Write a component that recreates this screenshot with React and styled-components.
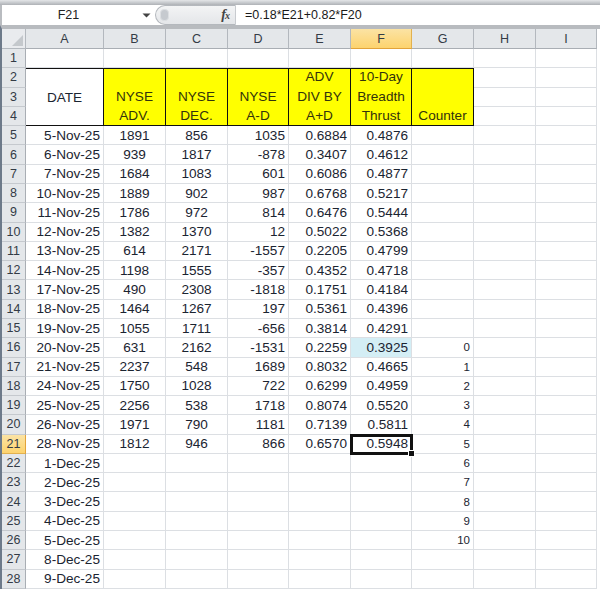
import React from "react";
import styled, { createGlobalStyle } from "styled-components";

const Global = createGlobalStyle`
  html, body { margin: 0; padding: 0; background: #fff; }
  body { width: 600px; height: 589px; overflow: hidden; font-family: "Liberation Sans", Arial, sans-serif; }
`;
const Page = styled.div`
  width: 600px; height: 589px; overflow: hidden; display: flex; flex-direction: column;
  background: #fff; color: #1b2431;
`;
const TopEdge = styled.div`
  height: 5px; background: linear-gradient(#e4e6e8, #c3c6ca 60%, #aeb1b5); flex: none;
`;
const FormulaBar = styled.div`
  height: 20px; flex: none; display: flex; align-items: stretch; background: #fff;
  border-left: 2px solid #b9bcc0;
`;
const NameBox = styled.div`
  width: 137px; flex: none; display: flex; align-items: center; justify-content: center;
  font-size: 12.5px; padding-right: 4px; box-sizing: border-box; color: #222;
`;
const Caret = styled.div`
  width: 15px; flex: none; display: flex; align-items: center; justify-content: center;
`;
const FnGroup = styled.div`
  width: 81px; flex: none; display: flex; align-items: center; justify-content: space-between;
  border: 1px solid #b4b8bd; border-right: 1px solid #c8cbcf; border-radius: 11px 0 0 11px;
  background: linear-gradient(#f3f4f5, #e4e6e9); box-sizing: border-box; margin-left: 1px; padding: 0 5px 0 4px;
`;
const Grip = styled.span`
  width: 9px; height: 12px; border-radius: 4px; background: #c6cacf; border: 1px solid #dcdfe2; box-sizing: border-box;
`;
const Fx = styled.span`
  font: italic bold 14px "Liberation Serif", serif; color: #444; line-height: 1;
`;
const FxSub = styled.span`
  font-size: 10px; margin-left: -1px;
`;
const FormulaText = styled.div`
  flex: 1; display: flex; align-items: center; padding-left: 9px; font-size: 12.5px; color: #1a1a1a;
`;
const Sheet = styled.div`
  flex: none; display: grid; height: 564px; border-top: 4px solid #b8bbbf; border-left: 2px solid #6d7a8a;
  box-sizing: border-box; width: 600px;
  grid-template-columns: 24px 78px 62px 62px 61px 62px 61px 62px 62px 61px 3px;
  grid-template-rows: 20px repeat(28, 19.29px);
  font-size: 13.6px;
`;
const Corner = styled.div`
  background: #e9ebee; border-right: 1px solid #b3b8be; border-bottom: 1px solid #b3b8be; position: relative;
  &::after {
    content: ""; position: absolute; right: 2px; bottom: 2px; width: 0; height: 0;
    border-style: solid; border-width: 0 0 11px 11px; border-color: transparent transparent #c4c8cc transparent;
  }
`;
const ColHead = styled.div`
  display: flex; align-items: center; justify-content: center; font-size: 12.5px; color: #333b46;
  background: ${p => p.$active ? "linear-gradient(#fbe3a4, #fdd36e)" : "#e4e7ea"};
  border-right: 1px solid ${p => p.$active ? "#e2b14f" : "#b3b8be"};
  border-bottom: 1px solid ${p => p.$active ? "#e2a33a" : "#a9aeb4"};
`;
const RowHead = styled.div`
  grid-column: 1;
  display: flex; align-items: center; justify-content: center; font-size: 12.5px; color: #333b46;
  background: ${p => p.$active ? "linear-gradient(#fbe3a4, #fdd36e)" : "#e4e7ea"};
  border-right: 1px solid ${p => p.$active ? "#e2a33a" : "#a9aeb4"};
  border-bottom: 1px solid ${p => p.$active ? "#e2b14f" : "#c5c9ce"};
`;
const Cell = styled.div`
  display: flex; align-items: center; white-space: nowrap; box-sizing: border-box; overflow: visible;
  justify-content: flex-end;
  padding: 0 3px 0 0;
  border-right: 1px solid #dcdfe3; border-bottom: 1px solid #dcdfe3;
  background: ${p => p.$hi ? "#d4eef5" : "transparent"};
  font-size: ${p => p.$small ? "11.5px" : "inherit"};
  position: relative;
`;
const Center = styled(Cell)`
  justify-content: center; padding: 0;
`;
const Selected = styled(Cell)`
  outline: 3px solid #111; outline-offset: -2px; z-index: 2;
  &::after {
    content: ""; position: absolute; right: -4px; bottom: -4px; width: 5px; height: 5px;
    background: #111; border: 1px solid #fff;
  }
`;
const HeaderCell = styled.div`
  grid-row: 3 / span 3;
  grid-column: ${p => p.$col};
  display: flex; flex-direction: column; align-items: center;
  justify-content: ${p => p.$plain ? "center" : "flex-end"};
  text-align: center; line-height: 19.29px; box-sizing: border-box;
  border-top: 1px solid #111; border-right: 1px solid #111; border-bottom: 1px solid #111;
  background: ${p => p.$plain ? "#fff" : "#ffff00"};
  color: ${p => p.$plain ? "#1b2431" : "#33330c"};
`;

const rows = [
  ["5-Nov-25",1891,856,1035,"0.6884","0.4876"],
  ["6-Nov-25",939,1817,-878,"0.3407","0.4612"],
  ["7-Nov-25",1684,1083,601,"0.6086","0.4877"],
  ["10-Nov-25",1889,902,987,"0.6768","0.5217"],
  ["11-Nov-25",1786,972,814,"0.6476","0.5444"],
  ["12-Nov-25",1382,1370,12,"0.5022","0.5368"],
  ["13-Nov-25",614,2171,-1557,"0.2205","0.4799"],
  ["14-Nov-25",1198,1555,-357,"0.4352","0.4718"],
  ["17-Nov-25",490,2308,-1818,"0.1751","0.4184"],
  ["18-Nov-25",1464,1267,197,"0.5361","0.4396"],
  ["19-Nov-25",1055,1711,-656,"0.3814","0.4291"],
  ["20-Nov-25",631,2162,-1531,"0.2259","0.3925"],
  ["21-Nov-25",2237,548,1689,"0.8032","0.4665"],
  ["24-Nov-25",1750,1028,722,"0.6299","0.4959"],
  ["25-Nov-25",2256,538,1718,"0.8074","0.5520"],
  ["26-Nov-25",1971,790,1181,"0.7139","0.5811"],
  ["28-Nov-25",1812,946,866,"0.6570","0.5948"],
  ["1-Dec-25"],["2-Dec-25"],["3-Dec-25"],["4-Dec-25"],["5-Dec-25"],["8-Dec-25"],["9-Dec-25"],
];
const cols = ["A","B","C","D","E","F","G","H","I"];
const headers = [
  ["NYSE","ADV."],["NYSE","DEC."],["NYSE","A-D"],["ADV","DIV BY","A+D"],["10-Day","Breadth","Thrust"],["Counter"],
];
const Blank = () => <Cell />;

export default function App() {
  return (
    <Page>
      <Global />
      <TopEdge />
      <FormulaBar>
        <NameBox>F21</NameBox>
        <Caret>
          <svg width="9" height="5" viewBox="0 0 9 5"><path d="M0.5 0.5h8L4.5 4.5z" fill="#444" /></svg>
        </Caret>
        <FnGroup><Grip /><Fx>f<FxSub>x</FxSub></Fx></FnGroup>
        <FormulaText>=0.18*E21+0.82*F20</FormulaText>
      </FormulaBar>
      <Sheet>
        <Corner />
        {cols.map(c => <ColHead key={c} $active={c === "F"}>{c}</ColHead>)}
        <div />
        <RowHead>1</RowHead>
        {cols.map(c => <Blank key={c} />)}
        <div />
        <HeaderCell $plain $col={2}>DATE</HeaderCell>
        {headers.map((h, i) => (
          <HeaderCell key={i} $col={i + 3}>{h.map(l => <span key={l}>{l}</span>)}</HeaderCell>
        ))}
        <RowHead>2</RowHead>
        <Blank /><Blank />
        <div />
        <RowHead>3</RowHead>
        <Blank /><Blank />
        <div />
        <RowHead>4</RowHead>
        <Blank /><Blank />
        <div />
        {rows.map((r, i) => {
          const num = i + 5;
          const c = num - 16;
          const sel = num === 21;
          return (
            <React.Fragment key={num}>
              <RowHead $active={sel}>{num}</RowHead>
              <Cell>{r[0]}</Cell>
              <Center>{r[1]}</Center>
              <Center>{r[2]}</Center>
              <Cell>{r[3]}</Cell>
              <Cell>{r[4]}</Cell>
              {sel ? <Selected>{r[5]}</Selected> : <Cell $hi={num === 16}>{r[5]}</Cell>}
              <Cell $small>{c >= 0 && c <= 10 ? c : ""}</Cell>
              <Blank /><Blank />
              <div />
            </React.Fragment>
          );
        })}
      </Sheet>
    </Page>
  );
}
